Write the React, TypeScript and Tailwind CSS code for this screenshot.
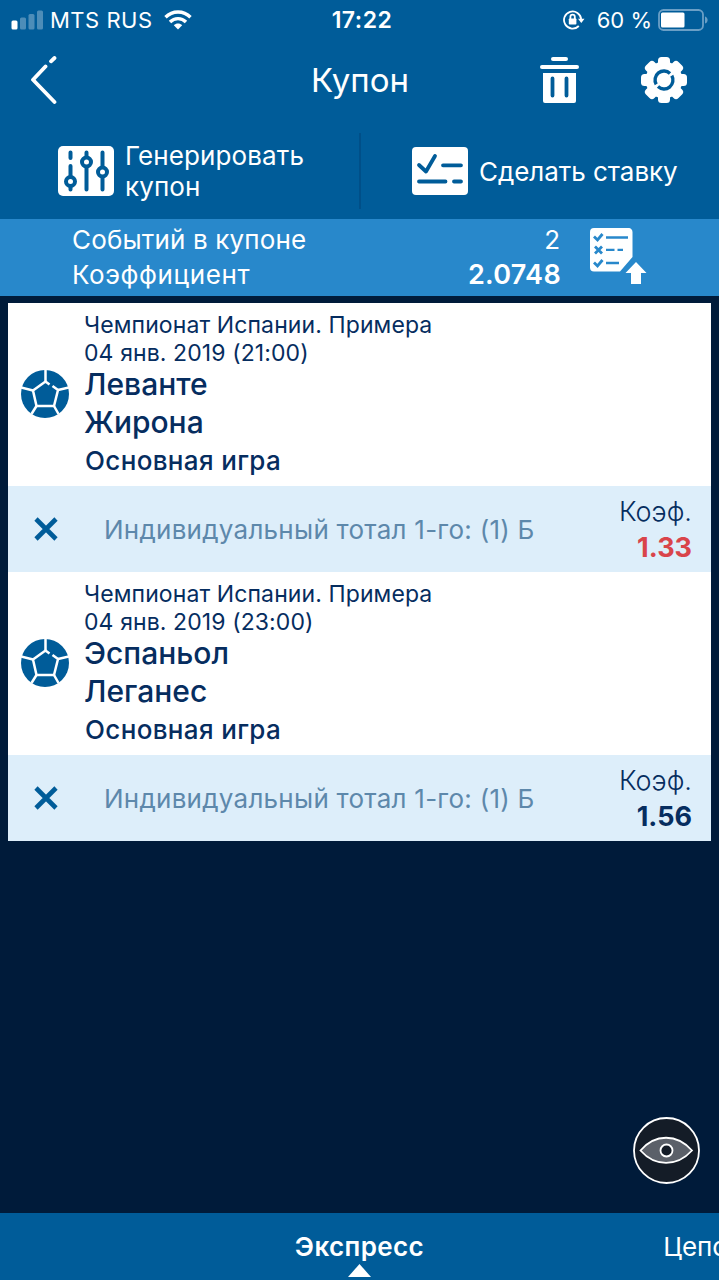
interface CouponEvent {
    id: number;
    league: string;
    date: string;
    home: string;
    away: string;
    period: string;
    bet: string;
    odds: string;
    dropped: boolean;
}

const EVENTS: CouponEvent[] = [
    {
        id: 1,
        league: "Чемпионат Испании. Примера",
        date: "04 янв. 2019 (21:00)",
        home: "Леванте",
        away: "Жирона",
        period: "Основная игра",
        bet: "Индивидуальный тотал 1-го: (1) Б",
        odds: "1.33",
        dropped: true,
    },
    {
        id: 2,
        league: "Чемпионат Испании. Примера",
        date: "04 янв. 2019 (23:00)",
        home: "Эспаньол",
        away: "Леганес",
        period: "Основная игра",
        bet: "Индивидуальный тотал 1-го: (1) Б",
        odds: "1.56",
        dropped: false,
    },
];

function BallIcon() {
    return (
        <svg className="h-12 w-12" viewBox="0 0 48 48" fill="none">
            <circle cx="24" cy="24" r="24" fill="#005c99" />
            <g stroke="#fff" strokeWidth="2.5">
                <path d="M28.5 14.5L24.5 11.5L12 20.5L15.5 36H33L37 20L31.5 16" />
                <path d="M24.5 0V11.5M0 17.5L12 20.5M48 17.5L37 20M15.5 36L10.5 44M33 36L37.5 44" />
            </g>
        </svg>
    );
}

function StatusBar() {
    return (
        <div className="grid h-10 grid-cols-[1fr_auto_1fr] items-center pl-[11px] pr-[11px] text-[22px] leading-10">
            <div className="flex items-center">
                <svg className="h-5 w-8" viewBox="0 0 32 20" fill="#fff">
                    <rect x="0.5" y="10.5" width="6" height="9" rx="1.5" />
                    <g opacity="0.3">
                        <rect x="9" y="7.5" width="6" height="12" rx="1.5" />
                        <rect x="17.5" y="4" width="6" height="15.5" rx="1.5" />
                        <rect x="26" y="0.5" width="6" height="19" rx="1.5" />
                    </g>
                </svg>
                <span className="ml-[7px] tracking-[0.5px]">MTS RUS</span>
                <svg className="ml-[11px] h-5 w-7" viewBox="0 0 28 20" fill="none" stroke="#fff" strokeWidth="3.4">
                    <path d="M1.5 7.2C8.5 0.2 19.5 0.2 26.5 7.2" />
                    <path d="M6 12C10.5 7.5 17.5 7.5 22 12" />
                    <path d="M14 19.5L9.8 15.3C12.2 13 15.8 13 18.2 15.3Z" fill="#fff" stroke="none" />
                </svg>
            </div>
            <div className="pl-[5px] text-[23px] font-semibold tracking-[0.5px]">17:22</div>
            <div className="flex items-center justify-end">
                <svg className="h-5 w-[22px]" viewBox="0 0 22 20" fill="none" stroke="#fff" strokeWidth="1.8">
                    <path d="M15.8 16A8.6 8.6 0 1 1 18.2 9.5" />
                    <path d="M15 8.8H21.5L18.3 13Z" fill="#fff" stroke="none" />
                    <rect x="5.8" y="8.5" width="7.6" height="6" rx="0.8" fill="#fff" stroke="none" />
                    <path d="M7.4 9V6.8A2.2 2.2 0 0 1 11.8 6.8V9" />
                </svg>
                <span className="ml-3">60 %</span>
                <svg className="ml-1.5 h-[22px] w-[50px]" viewBox="0 0 50 22">
                    <rect x="1" y="1" width="44" height="20" rx="4.5" fill="none" stroke="#6a9fc6" strokeWidth="1.8" />
                    <rect x="3" y="3.5" width="23.5" height="15" rx="1.5" fill="#fff" />
                    <path d="M47 7.5C50.5 8.5 50.5 13.5 47 14.5Z" fill="#6a9fc6" />
                </svg>
            </div>
        </div>
    );
}

function TitleBar() {
    return (
        <div className="grid h-20 grid-cols-[1fr_auto_1fr] items-center pl-[30px] pr-8">
            <button type="button" aria-label="Назад" className="h-12 w-7">
                <svg className="h-12 w-7" viewBox="0 0 28 48" fill="none" stroke="#fff" strokeWidth="3.8" strokeLinecap="round">
                    <path d="M21 5.3L24.5 2" />
                    <path d="M15.5 10.5L3 23.7L24.5 46" strokeLinejoin="round" />
                </svg>
            </button>
            <h1 className="pl-[3px] text-[33px] leading-10">Купон</h1>
            <div className="flex items-center justify-end gap-[62px]">
                <svg className="h-[46px] w-[39px]" viewBox="0 0 39 46" fill="#fff">
                    <rect x="11" y="0" width="17" height="4" rx="2" />
                    <rect x="0" y="8" width="39" height="4" rx="2" />
                    <path d="M3 16H36V44A2 2 0 0 1 34 46H5A2 2 0 0 1 3 44Z" />
                    <path d="M12.5 21.5V38.5M26.5 21.5V38.5" stroke="#005c99" strokeWidth="3.8" strokeLinecap="round" />
                </svg>
                <svg className="h-[46px] w-[46px]" viewBox="-23 -23 46 46">
                    <g fill="#fff">
                        <circle r="18.5" />
                        <rect x="-6" y="-23" width="12" height="46" rx="3.5" />
                        <rect x="-6" y="-23" width="12" height="46" rx="3.5" transform="rotate(45)" />
                        <rect x="-6" y="-23" width="12" height="46" rx="3.5" transform="rotate(90)" />
                        <rect x="-6" y="-23" width="12" height="46" rx="3.5" transform="rotate(135)" />
                    </g>
                    <g fill="none" stroke="#005c99" strokeWidth="3.4">
                        <path d="M-7.8 4.3A8.9 8.9 0 0 1 6 -6.6" />
                        <path d="M7.8 -4.3A8.9 8.9 0 0 1 -6 6.6" />
                    </g>
                </svg>
            </div>
        </div>
    );
}

function Actions() {
    return (
        <div className="flex h-[99px] items-center pt-[3px] text-[26px] leading-[31px]">
            <button type="button" className="flex w-[359px] items-center pl-[58px] text-left">
                <svg className="h-[50px] w-14 shrink-0" viewBox="0 0 56 50">
                    <rect width="56" height="50" rx="5" fill="#fff" />
                    <g fill="none" stroke="#005c99" strokeWidth="4" strokeLinecap="round">
                        <path d="M12.5 6.5V12M12.5 20V30M12.5 41V43.5" />
                        <path d="M28.5 6.5V11M28.5 22V43.5" />
                        <path d="M44.5 6.5V21M44.5 32V43.5" />
                        <circle cx="12.5" cy="35.5" r="4.5" />
                        <circle cx="28.5" cy="16" r="4.5" />
                        <circle cx="44.5" cy="26" r="4.5" />
                    </g>
                </svg>
                <span className="ml-[11px] w-[200px] tracking-[0.1px]">Генерировать купон</span>
            </button>
            <div className="h-[76px] w-0.5 bg-[#004f88]" />
            <button type="button" className="flex flex-1 items-center pl-[51px]">
                <svg className="h-12 w-14 shrink-0" viewBox="0 0 56 48">
                    <rect width="56" height="48" rx="4" fill="#fff" />
                    <g fill="none" stroke="#005c99" strokeWidth="3.8" strokeLinecap="round" strokeLinejoin="round">
                        <path d="M7 18L14 24.5L23 9" />
                        <path d="M31 18.3H49M7 34.5H33.5M42 34.5H49" />
                    </g>
                </svg>
                <span className="ml-[11px] whitespace-nowrap tracking-[-0.05px]">Сделать ставку</span>
            </button>
        </div>
    );
}

function Summary() {
    return (
        <div className="flex h-[77px] items-center bg-[#2888cb] pl-[72px] pr-[72px] text-[26px] leading-[34.5px] text-white">
            <dl className="grid w-[488px] grid-cols-[1fr_auto]">
                <dt className="tracking-[0.15px]">Событий в купоне</dt>
                <dd className="text-right">2</dd>
                <dt className="tracking-[0.6px]">Коэффициент</dt>
                <dd className="-mr-px text-right text-[27px] font-semibold tracking-[0.3px]">2.0748</dd>
            </dl>
            <svg className="mb-0.5 ml-[30px] h-[57px] w-[57px] shrink-0" viewBox="0 0 57 57">
                <path d="M4 0H38A4 4 0 0 1 42.5 4V29L30 43.5H4A4 4 0 0 1 0 39.5V4A4 4 0 0 1 4 0Z" fill="#fff" />
                <path d="M46 34L56.5 45H51V56H41V45H35.5Z" fill="#fff" />
                <g fill="none" stroke="#2888cb" strokeWidth="2.3">
                    <path d="M4 8.5L7.5 12L12.5 6M4 34.5L7.5 38L12.5 32M5 18.5L12 25.5M12 18.5L5 25.5" strokeWidth="2.8" />
                    <path d="M16 9.5H38M16 21.8H24.5M27.5 21.8H33M16 35H29" />
                </g>
            </svg>
        </div>
    );
}

function EventCard({ event }: { event: CouponEvent }) {
    return (
        <li>
            <div className="flex h-[183px] bg-white pt-2">
                <div className="w-[76px] pl-[13px] pt-[59px]">
                    <BallIcon />
                </div>
                <div className="text-[#062d5f]">
                    <div className="text-[23px] leading-7 tracking-[0.1px]">
                        <p>{event.league}</p>
                        <p>{event.date}</p>
                    </div>
                    <div className="-mt-px text-[30px] font-medium leading-[37.5px]">
                        <p>{event.home}</p>
                        <p>{event.away}</p>
                    </div>
                    <p className="pl-px text-[26px] font-medium leading-10 tracking-[0.35px]">{event.period}</p>
                </div>
            </div>
            <div className="flex h-[86px] items-center bg-[#ddeefa] pl-[26px] pr-5">
                <button type="button" aria-label="Удалить">
                    <svg className="h-6 w-6" viewBox="0 0 24 24" stroke="#005c99" strokeWidth="4.6">
                        <path d="M2 2L22 22M22 2L2 22" />
                    </svg>
                </button>
                <p className="ml-[46px] flex-1 whitespace-nowrap text-[26px] tracking-[0.25px] text-[#5d88ab]">{event.bet}</p>
                <div className="-mr-px pt-0.5 text-right text-[27px] leading-9 text-[#062d5f]">
                    <p className="font-light">Коэф.</p>
                    <p className={event.dropped ? "font-bold text-[#d9444a]" : "font-bold"}>{event.odds}</p>
                </div>
            </div>
        </li>
    );
}

export default function App() {
    return (
        <div className="relative flex h-[1280px] w-[719px] flex-col overflow-hidden bg-[#001b3a] font-['Inter','Noto_Sans',sans-serif]">
            <header className="bg-[#005c99] text-white">
                <StatusBar />
                <TitleBar />
                <Actions />
            </header>
            <Summary />

            <ul className="mx-2 mt-[7px] flex-1">
                {EVENTS.map((e) => (
                    <EventCard key={e.id} event={e} />
                ))}
            </ul>

            <button type="button" aria-label="Показать" className="absolute left-[633px] top-[1117px]">
                <svg className="h-[67px] w-[67px]" viewBox="0 0 67 67" stroke="#fff" strokeWidth="1.8">
                    <circle cx="33.5" cy="33.5" r="32.5" fill="#141c27" />
                    <path d="M7.5 33.5C22 16.5 44 16.5 59 33.5C44 50 22 50 7.5 33.5Z" fill="#5b6069" />
                    <circle cx="33.5" cy="33.5" r="6" fill="#141c27" />
                </svg>
            </button>

            <nav className="grid h-[67px] grid-cols-[1fr_auto_1fr] bg-[#005c99] text-[26px] text-white">
                <span />
                <div className="flex flex-col items-center pt-[17px]">
                    <span className="font-semibold leading-[34px] tracking-[0.4px]">Экспресс</span>
                    <svg className="h-[13px] w-[23px]" viewBox="0 0 23 13" fill="#fff">
                        <path d="M11.5 0L23 13H0Z" />
                    </svg>
                </div>
                <span className="w-0 pl-[239px] pt-[17px] leading-[34px]">Цепочка</span>
            </nav>
        </div>
    );
}
